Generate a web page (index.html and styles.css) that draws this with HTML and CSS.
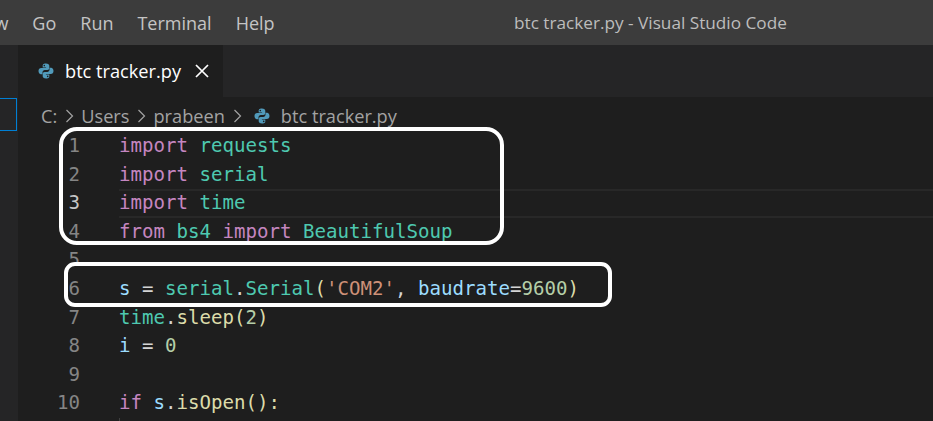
FILE: index.html
```html
<!DOCTYPE html>
<html lang="en">
<head>
<meta charset="utf-8">
<title>btc tracker.py - Visual Studio Code</title>
<link rel="stylesheet" href="styles.css">
</head>
<body>
<div class="window">
  <header class="titlebar">
    <nav class="menu">
      <span>View</span><span>Go</span><span>Run</span><span>Terminal</span><span>Help</span>
    </nav>
    <div class="title">btc tracker.py - Visual Studio Code</div>
  </header>
  <div class="main">
    <aside class="sidebar"><div class="selected"></div></aside>
    <section class="editor">
      <div class="tabs">
        <div class="tab">
          <svg class="py" viewBox="0 0 16 16"><use href="#python"/></svg>
          <span class="tabname">btc tracker.py</span>
          <svg class="close" viewBox="0 0 14 14"><path d="M1 1l12 12M13 1L1 13"/></svg>
        </div>
      </div>
      <div class="crumbs">
        <span>C:</span><svg class="chev" viewBox="0 0 8 14"><path d="M1 1l6 6-6 6"/></svg>
        <span>Users</span><svg class="chev" viewBox="0 0 8 14"><path d="M1 1l6 6-6 6"/></svg>
        <span>prabeen</span><svg class="chev" viewBox="0 0 8 14"><path d="M1 1l6 6-6 6"/></svg>
        <svg class="py" viewBox="0 0 16 16"><use href="#python"/></svg>
        <span>btc tracker.py</span>
      </div>
      <div class="code">
        <div class="line"><span class="no">1</span><code><i class="k">import</i> <i class="m">requests</i></code></div>
        <div class="line"><span class="no">2</span><code><i class="k">import</i> <i class="m">serial</i></code></div>
        <div class="line current"><span class="no">3</span><code><i class="k">import</i> <i class="m">time</i></code></div>
        <div class="line"><span class="no">4</span><code><i class="k">from</i> <i class="m">bs4</i> <i class="k">import</i> <i class="m">BeautifulSoup</i></code></div>
        <div class="line"><span class="no">5</span><code></code></div>
        <div class="line"><span class="no">6</span><code><i class="v">s</i> = <i class="m">serial</i>.<i class="m">Serial</i><i class="f">(</i><i class="s">'COM2'</i>, <i class="v">baudrate</i>=<i class="n">9600</i><i class="f">)</i></code></div>
        <div class="line"><span class="no">7</span><code><i class="m">time</i>.<i class="f">sleep</i><i class="f">(</i><i class="n">2</i><i class="f">)</i></code></div>
        <div class="line"><span class="no">8</span><code><i class="v">i</i> = <i class="n">0</i></code></div>
        <div class="line"><span class="no">9</span><code></code></div>
        <div class="line"><span class="no">10</span><code><i class="k">if</i> <i class="v">s</i>.<i class="f">isOpen</i><i class="f">():</i></code></div>
        <div class="line guide"><span class="no"></span><code></code></div>
      </div>
    </section>
  </div>
  <div class="mark mark-imports"></div>
  <div class="mark mark-serial"></div>
</div>
<svg class="defs" width="0" height="0">
  <symbol id="python" viewBox="0 0 16 16">
    <path fill="#519aba" d="M7.9.5C5 .5 4.7 1.8 4.7 2.8v1.7h3.4V5H3.2C1.6 5 .5 6.2.5 8c0 1.9 1 3.2 2.5 3.2h1.5V9.3c0-1.2 1-2.3 2.3-2.3h2.6c1.1 0 1.9-.9 1.9-2V2.800c0-1.200-1-2.300-3.400-2.300zM6.300 1.800a.8.8 0 110 1.600.8.8 0 010-1.600z"/>
    <path fill="#519aba" d="M8.100 15.500c2.900 0 3.200-1.300 3.200-2.300v-1.700H7.900V11h4.900c1.600 0 2.700-1.200 2.700-3 0-1.900-1-3.200-2.500-3.200h-1.500v1.900c0 1.200-1 2.300-2.300 2.300H6.600c-1.100 0-1.900.9-1.900 2v2.200c0 1.200 1 2.300 3.400 2.300zm1.600-1.300a.8.8 0 110-1.600.8.8 0 010 1.600z"/>
  </symbol>
</svg>
</body>
</html>
```
FILE: styles.css
```css
* { box-sizing: border-box; }
html, body { margin: 0; height: 100%; }
body { background: #1e1e1e; overflow: hidden; }
.window { position: relative; width: 933px; height: 421px; overflow: hidden; display: flex; flex-direction: column; font-family: "Open Sans", "Noto Sans", sans-serif; }
.titlebar { height: 45px; flex: none; background: #3c3c3c; display: flex; align-items: center; position: relative; font-size: 18px; }
.menu { display: flex; gap: 24px; margin-left: -31px; color: #c4c4c4; }
.title { position: absolute; left: 514px; top: 11px; white-space: nowrap; color: #bdbdbd; font-size: 17.2px; }
.main { flex: 1; display: flex; min-height: 0; }
.sidebar { width: 18px; flex: none; background: #252526; padding-top: 53px; }
.selected { width: 17px; height: 33px; border: 1px solid #007fd4; border-left: 0; }
.editor { flex: 1; min-width: 0; display: flex; flex-direction: column; }
.tabs { height: 52px; flex: none; background: #252526; display: flex; }
.tab { width: 205px; background: #1e1e1e; display: flex; align-items: center; padding: 0 0 0 20px; color: #fff; font-size: 18.2px; }
.py { width: 16px; height: 16px; flex: none; }
.tabname { margin-left: 11px; }
.close { width: 14px; height: 14px; margin-left: 14px; fill: none; stroke: #fff; stroke-width: 1.7; }
.crumbs { height: 35px; flex: none; display: flex; align-items: center; padding: 2px 0 0 23px; color: #a3a3a3; font-size: 18.2px; }
.chev { width: 9px; height: 14px; margin: 0 7px 0 8px; fill: none; stroke: #a3a3a3; stroke-width: 1.2; flex: none; }
.crumbs .py { margin-right: 11px; margin-left: 5px; }
.code { font-family: "DejaVu Sans Mono", "Liberation Mono", monospace; font-size: 19.1px; color: #d4d4d4; }
.line { height: 28.6px; line-height: 28.6px; display: flex; white-space: pre; }
.no { width: 62px; flex: none; text-align: right; color: #858585; }
.line code { font: inherit; margin-left: 39px; flex: 1; }
.current .no { color: #c6c6c6; }
.current code { border-top: 2px solid #282828; border-bottom: 2px solid #282828; line-height: 24.6px; }
.guide code { border-left: 1px solid #404040; }
i { font-style: normal; }
.k { color: #c586c0; }
.m { color: #4ec9b0; }
.v { color: #9cdcfe; }
.f { color: #dcdcaa; }
.s { color: #ce9178; }
.n { color: #b5cea8; }
.mark { position: absolute; border: 4px solid #fff; }
.mark-imports { left: 59px; top: 127px; width: 445px; height: 118px; border-radius: 18px; }
.mark-serial { left: 64px; top: 262px; width: 548px; height: 45px; border-radius: 11px; }
.defs { position: absolute; }
```
